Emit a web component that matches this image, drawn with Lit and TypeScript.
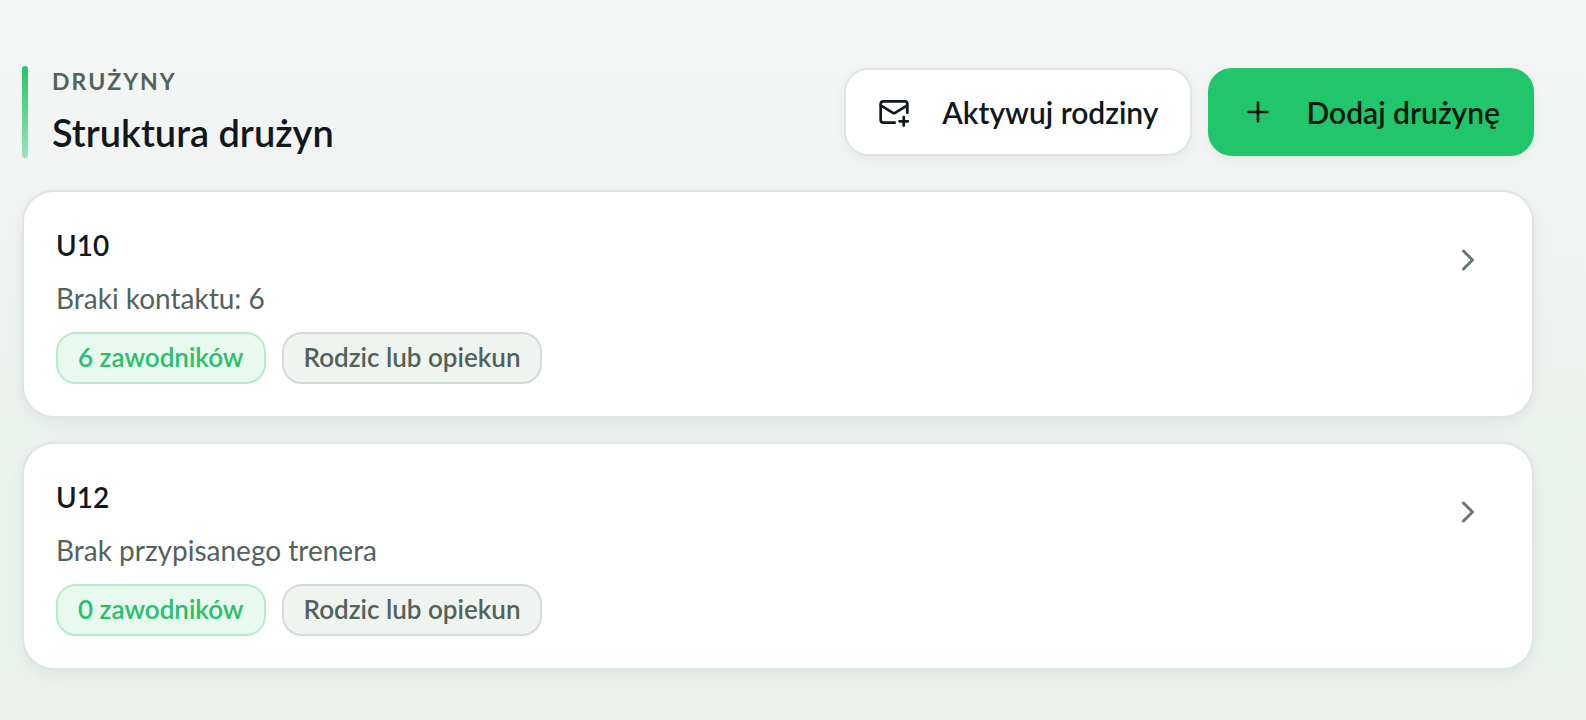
import { LitElement, html, css, svg } from "lit";
import { customElement, property } from "lit/decorators.js";

interface Team {
  name: string;
  note: string;
  players: string;
  contact: string;
}

const teams: Team[] = [
  { name: "U10", note: "Braki kontaktu: 6", players: "6 zawodników", contact: "Rodzic lub opiekun" },
  { name: "U12", note: "Brak przypisanego trenera", players: "0 zawodników", contact: "Rodzic lub opiekun" },
];

const mailPlus = svg`
  <path d="M22 12.5V6a2 2 0 0 0-2-2H4a2 2 0 0 0-2 2v12a2 2 0 0 0 2 2h8.5" />
  <path d="m22 7-9.2 5.6a1.6 1.6 0 0 1-1.6 0L2 7" />
  <path d="M19.3 15.8v6.4M16.2 19h6.2" />`;
const plus = svg`<path d="M5 12h14M12 5v14" />`;
const chevron = svg`<path d="m9 18 6-6-6-6" />`;

@customElement("team-card")
export class TeamCard extends LitElement {
  @property({ attribute: false }) team!: Team;

  static styles = css`
    :host {
      display: block;
    }
    .card {
      display: flex;
      align-items: flex-start;
      justify-content: space-between;
      padding: 32px;
      border: 2px solid #dfe5e2;
      border-radius: 32px;
      background: #ffffff;
      box-shadow: 0 4px 12px rgba(20, 50, 40, 0.05), 0 12px 40px rgba(20, 50, 40, 0.02);
    }
    .name {
      margin: 0;
      font-size: 28px;
      line-height: 42px;
      font-weight: 600;
      color: #10181b;
    }
    .note {
      margin: 12px 0 14px;
      font-size: 28px;
      line-height: 40px;
      color: #53625b;
    }
    .chips {
      display: flex;
      flex-wrap: wrap;
      gap: 16px;
    }
    .chip {
      padding: 0 20px 2px;
      border: 2px solid #d5dcd8;
      border-radius: 20px;
      background: #f0f4f1;
      font-size: 26px;
      line-height: 46px;
      font-weight: 600;
      color: #53625b;
    }
    .chip.players {
      border-color: #b7ebcd;
      background: #e8f9ef;
      color: #2bbf6c;
    }
    .open {
      display: grid;
      place-items: center;
      width: 64px;
      height: 72px;
      padding: 0;
      border: 0;
      background: none;
      color: #6b7772;
      cursor: pointer;
    }
    .icon {
      width: 36px;
      height: 36px;
      fill: none;
      stroke: currentColor;
      stroke-width: 2;
      stroke-linecap: round;
      stroke-linejoin: round;
    }
  `;

  render() {
    const { name, note, players, contact } = this.team;
    return html`
      <article class="card">
        <div>
          <h3 class="name">${name}</h3>
          <p class="note">${note}</p>
          <div class="chips">
            <span class="chip players">${players}</span>
            <span class="chip">${contact}</span>
          </div>
        </div>
        <button class="open" type="button" aria-label=${name}>
          <svg class="icon" viewBox="0 0 24 24" aria-hidden="true">${chevron}</svg>
        </button>
      </article>
    `;
  }
}

@customElement("app-root")
export class AppRoot extends LitElement {
  static styles = css`
    :host {
      display: block;
      box-sizing: border-box;
      min-height: 100vh;
      padding: 66px 52px 50px 22px;
      background: linear-gradient(180deg, #f4f6f5 0%, #f1f4f3 25%, #ecf2ee 65%, #edf2ee 100%);
      font-family: Lato, "Open Sans", sans-serif;
      color: #10181b;
    }
    .header {
      display: flex;
      flex-wrap: wrap;
      align-items: center;
      justify-content: space-between;
      gap: 16px;
      margin-bottom: 32px;
    }
    .heading {
      display: flex;
      gap: 24px;
    }
    .accent {
      width: 6px;
      border-radius: 3px;
      background: linear-gradient(180deg, #21c56b, #9be3bb);
    }
    .eyebrow {
      margin: 0 0 10px;
      font-size: 23px;
      line-height: 30px;
      font-weight: 700;
      letter-spacing: 2px;
      text-transform: uppercase;
      color: #53625b;
    }
    .title {
      margin: 0;
      font-size: 38px;
      line-height: 52px;
      font-weight: 600;
    }
    .actions {
      display: flex;
      flex-wrap: wrap;
      gap: 16px;
    }
    .button {
      display: flex;
      align-items: center;
      gap: 32px;
      height: 88px;
      padding: 0 32px;
      border: 2px solid #dfe5e2;
      border-radius: 24px;
      background: #ffffff;
      box-shadow: 0 4px 12px rgba(20, 50, 40, 0.05);
      font: 600 30px / 44px Lato, "Open Sans", sans-serif;
      color: #10181b;
      cursor: pointer;
    }
    .button.primary {
      border-color: #21c56b;
      background: #21c56b;
      color: #04170c;
    }
    .icon {
      width: 32px;
      height: 32px;
      fill: none;
      stroke: currentColor;
      stroke-width: 2;
      stroke-linecap: round;
      stroke-linejoin: round;
    }
    .list {
      display: grid;
      gap: 24px;
    }
  `;

  render() {
    return html`
      <header class="header">
        <div class="heading">
          <span class="accent"></span>
          <div>
            <p class="eyebrow">Drużyny</p>
            <h2 class="title">Struktura drużyn</h2>
          </div>
        </div>
        <div class="actions">
          <button class="button" type="button">
            <svg class="icon" viewBox="0 0 24 24" aria-hidden="true">${mailPlus}</svg>
            Aktywuj rodziny
          </button>
          <button class="button primary" type="button">
            <svg class="icon" viewBox="0 0 24 24" aria-hidden="true">${plus}</svg>
            Dodaj drużynę
          </button>
        </div>
      </header>
      <main class="list">
        ${teams.map((team) => html`<team-card .team=${team}></team-card>`)}
      </main>
    `;
  }
}
